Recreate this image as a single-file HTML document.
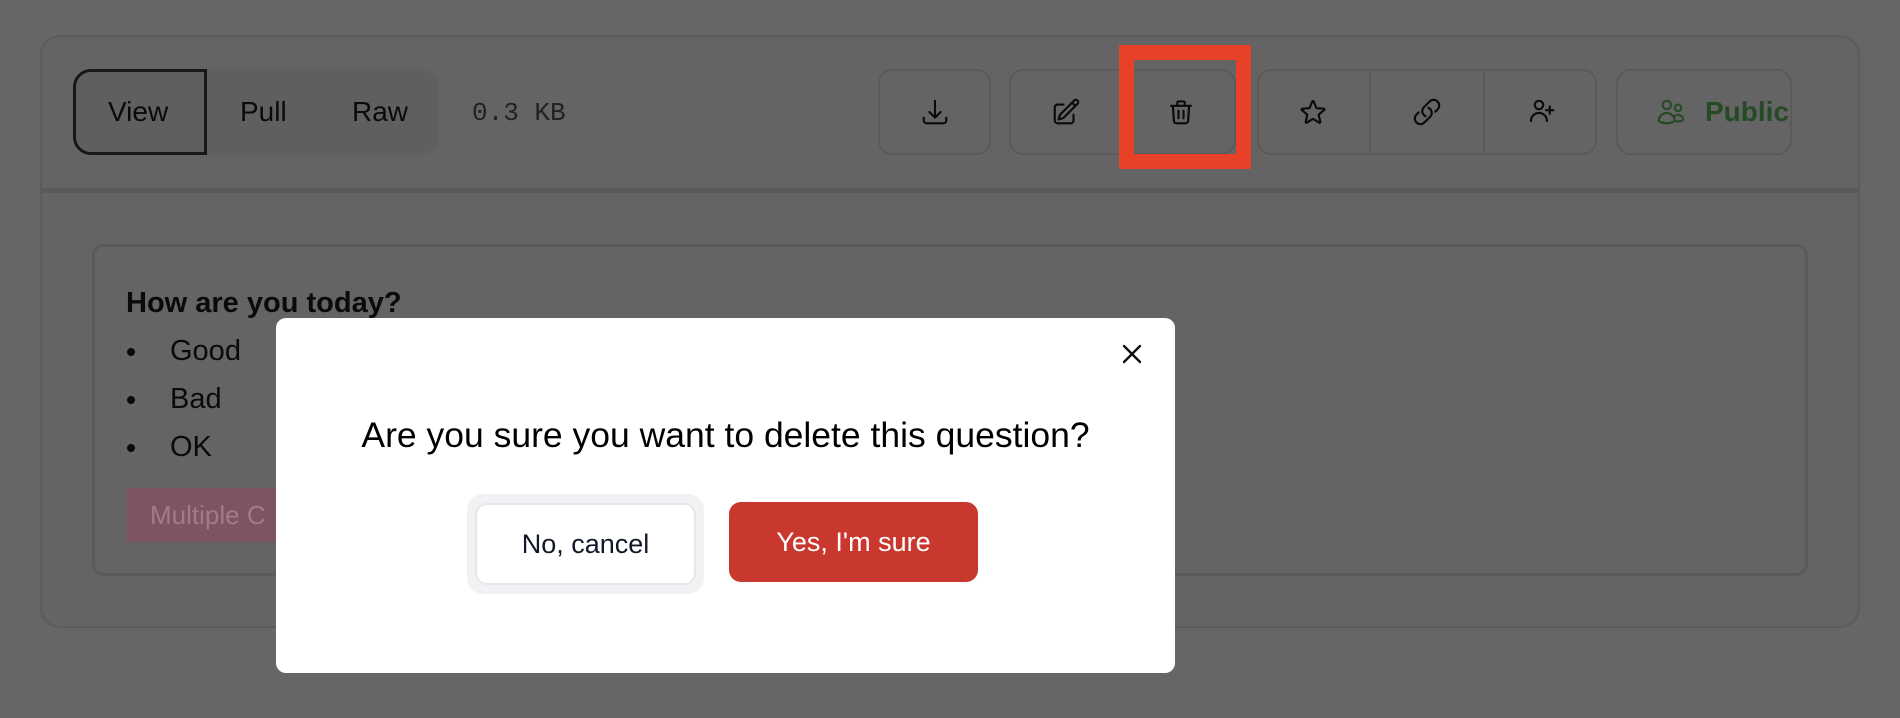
<!DOCTYPE html>
<html><head><meta charset="utf-8"><style>
*{box-sizing:border-box;margin:0;padding:0}
body{width:1900px;height:718px;background:#666;font-family:"Liberation Sans",Arial,sans-serif;position:relative;overflow:hidden}
.abs{position:absolute}
.card{left:40px;top:35px;width:1820px;height:593px;border:2px solid #5c5c5c;border-radius:20px;background:#646464}
.div{left:42px;top:188px;width:1816px;height:5px;background:#5a5a5a}
.tabs{left:73px;top:69px;width:366px;height:86px;background:#5f5f5f;border-radius:18px}
.view{left:73px;top:69px;width:134px;height:86px;border:3px solid #16181c;border-radius:18px 0 0 18px}
.t{font-size:28px;color:#0a0a0a;line-height:1}
.btn{border:2px solid #5a5a5a;border-radius:14px;height:86px;top:69px}
.ic{position:absolute;width:30px;height:30px;fill:none;stroke:#0a0a0a;stroke-width:1.7;stroke-linecap:round;stroke-linejoin:round}
.vl{top:69px;width:2px;height:86px;background:#5a5a5a}
.inner{left:92px;top:244px;width:1716px;height:332px;border:3px solid #5a5a5a;border-radius:12px}
.li{font-size:29px;color:#0a0a0a;line-height:1}
.dot{width:8px;height:8px;border-radius:50%;background:#0a0a0a}
.modal{left:276px;top:318px;width:899px;height:355px;background:#fff;border-radius:10px}
</style></head><body>
<div class="abs card"></div>
<div class="abs div"></div>
<div class="abs tabs"></div>
<div class="abs view"></div>
<div class="abs t" style="left:108px;top:98px">View</div>
<div class="abs t" style="left:240px;top:98px">Pull</div>
<div class="abs t" style="left:352px;top:98px">Raw</div>
<div class="abs" style="left:472px;top:98px;font-family:'Liberation Mono',monospace;font-size:26px;color:#222">0.3 KB</div>

<div class="abs btn" style="left:878px;width:113px"></div>
<svg class="ic" viewBox="0 0 24 24" style="left:920px;top:97px"><path d="M3 16.5v2.25A2.25 2.25 0 005.25 21h13.5A2.25 2.25 0 0021 18.75V16.5M16.5 12L12 16.5m0 0L7.5 12m4.5 4.5V3"/></svg>
<div class="abs btn" style="left:1009px;width:227px"></div>
<svg class="ic" viewBox="0 0 24 24" style="left:1051px;top:97px"><path d="M16.862 4.487l1.687-1.688a1.875 1.875 0 112.652 2.652L10.582 16.07a4.5 4.5 0 01-1.897 1.13L6 18l.8-2.685a4.5 4.5 0 011.13-1.897l8.932-8.931zm0 0L19.5 7.125M18 14v4.75A2.25 2.25 0 0115.75 21H5.25A2.25 2.25 0 013 18.75V8.25A2.25 2.25 0 015.25 6H10"/></svg>
<svg class="ic" viewBox="0 0 24 24" style="left:1166px;top:97px"><path d="M4 7h16M10 11v6M14 11v6M5.5 7l.8 12a2 2 0 002 2h7.4a2 2 0 002-2l.8-12M9 7V4.5a1 1 0 011-1h4a1 1 0 011 1V7"/></svg>
<div class="abs btn" style="left:1257px;width:340px"></div>
<div class="abs vl" style="left:1369px"></div>
<div class="abs vl" style="left:1483px"></div>
<svg class="ic" viewBox="0 0 24 24" style="left:1298px;top:97px"><path d="M11.48 3.499a.562.562 0 011.04 0l2.125 5.111a.563.563 0 00.475.345l5.518.442c.499.04.701.663.321.988l-4.204 3.602a.563.563 0 00-.182.557l1.285 5.385a.562.562 0 01-.84.61l-4.725-2.885a.563.563 0 00-.586 0L6.982 20.54a.562.562 0 01-.84-.61l1.285-5.386a.562.562 0 00-.182-.557l-4.204-3.602a.563.563 0 01.321-.988l5.518-.442a.563.563 0 00.475-.345L11.48 3.5z"/></svg>
<svg class="ic" viewBox="0 0 24 24" style="left:1412px;top:97px"><path d="M13.19 8.688a4.5 4.5 0 011.242 7.244l-4.5 4.5a4.5 4.5 0 01-6.364-6.364l1.757-1.757m13.35-.622l1.757-1.757a4.5 4.5 0 00-6.364-6.364l-4.5 4.5a4.5 4.5 0 001.242 7.244"/></svg>
<svg class="ic" viewBox="0 0 24 24" style="left:1526px;top:97px"><path d="M19 7.5v3m0 0v3m0-3h3m-3 0h-3m-2.25-4.125a3.375 3.375 0 11-6.75 0 3.375 3.375 0 016.75 0zM4 19.235v-.11a6.375 6.375 0 0112.75 0v.109"/></svg>
<div class="abs btn" style="left:1616px;width:176px"></div>
<svg class="ic" viewBox="0 0 24 24" style="left:1656px;top:97px;stroke:#254a25"><path d="M15 19.128a9.38 9.38 0 002.625.372 9.337 9.337 0 004.121-.952 4.125 4.125 0 00-7.533-2.493M15 19.128v-.003c0-1.113-.285-2.16-.786-3.07M15 19.128v.106A12.318 12.318 0 018.624 21c-2.331 0-4.512-.645-6.374-1.766l-.001-.109a6.375 6.375 0 0111.964-3.07M12 6.375a3.375 3.375 0 11-6.75 0 3.375 3.375 0 016.75 0zm8.25 2.25a2.625 2.625 0 11-5.25 0 2.625 2.625 0 015.25 0z"/></svg>
<div class="abs" style="left:1705px;top:98px;font-size:28px;color:#254a25;font-weight:bold;line-height:1">Public</div>

<div class="abs" style="left:1119px;top:45px;width:132px;height:124px;border:15px solid #e94128"></div>

<div class="abs inner"></div>
<div class="abs" style="left:126px;top:289px;font-size:29px;font-weight:bold;color:#0a0a0a;line-height:1">How are you today?</div>
<div class="abs dot" style="left:127px;top:348px"></div><div class="abs li" style="left:170px;top:337px">Good</div>
<div class="abs dot" style="left:127px;top:396px"></div><div class="abs li" style="left:170px;top:385px">Bad</div>
<div class="abs dot" style="left:127px;top:444px"></div><div class="abs li" style="left:170px;top:433px">OK</div>
<div class="abs" style="left:126px;top:488px;width:160px;height:54px;background:#7d5464"></div>
<div class="abs" style="left:150px;top:502px;font-size:26px;color:#a07c8a;line-height:1">Multiple C</div>

<div class="abs modal"></div>
<svg class="abs" style="left:1122px;top:344px" width="20" height="20" viewBox="0 0 20 20"><path d="M2 2L18 18M18 2L2 18" stroke="#111" stroke-width="2.4" stroke-linecap="round"/></svg>
<div class="abs" style="left:276px;width:899px;top:418px;text-align:center;font-size:35.5px;color:#000;line-height:1">Are you sure you want to delete this question?</div>
<div class="abs" style="left:467px;top:494px;width:237px;height:100px;background:#f1f2f4;border-radius:16px"></div>
<div class="abs" style="left:475px;top:503px;width:221px;height:82px;background:#fff;border:2px solid #e5e7eb;border-radius:12px;display:flex;align-items:center;justify-content:center;font-size:27px;color:#111827;font-weight:500">No, cancel</div>
<div class="abs" style="left:729px;top:502px;width:249px;height:80px;background:#c9382f;border-radius:12px;display:flex;align-items:center;justify-content:center;font-size:27px;color:#fff;font-weight:500">Yes, I'm sure</div>
</body></html>
